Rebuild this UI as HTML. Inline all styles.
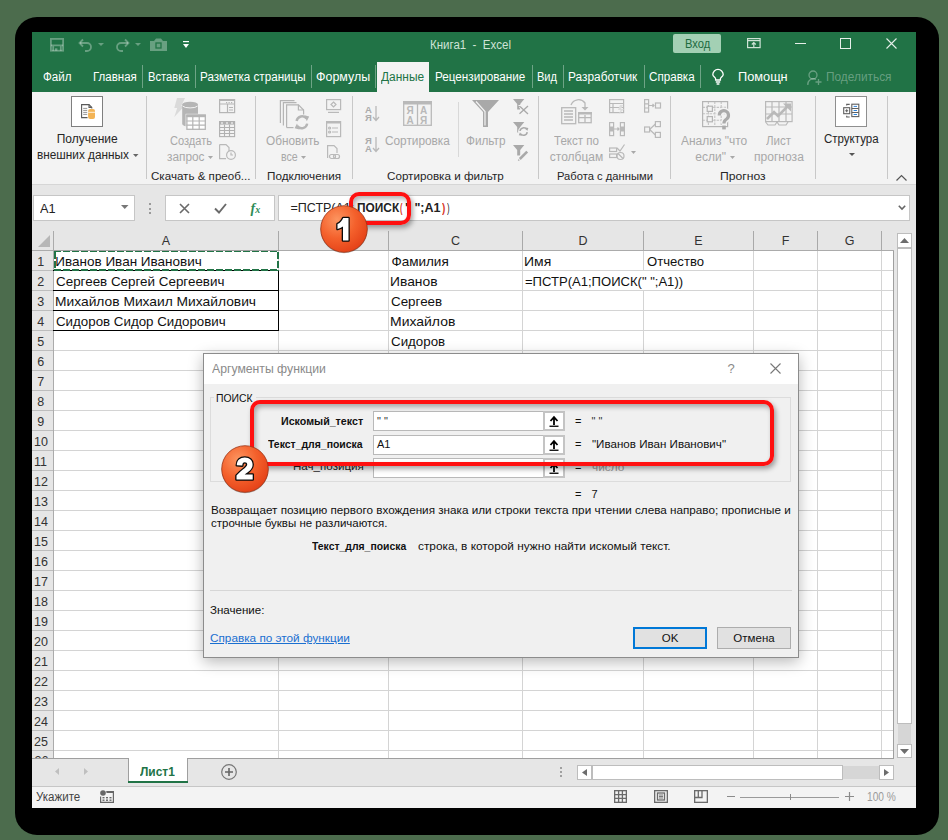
<!DOCTYPE html><html><head><meta charset="utf-8"><style>
html,body{margin:0;padding:0;}
body{width:948px;height:840px;position:relative;overflow:hidden;background:#4c6c4d;font-family:'Liberation Sans', sans-serif;}
.t{position:absolute;white-space:nowrap;line-height:1;}
svg{overflow:visible}
</style></head><body>
<div style="position:absolute;left:15px;top:17px;width:924px;height:818px;background:#000;border-radius:22px;"></div>
<div style="position:absolute;left:32px;top:32px;width:884px;height:776px;background:#f3f3f3;"></div>
<div style="position:absolute;left:32px;top:32px;width:884px;height:60px;background:#217346;"></div>
<svg style="position:absolute;left:50px;top:38px;" width="15" height="14" viewBox="0 0 15 14"><g fill="none" stroke="rgba(255,255,255,0.32)" stroke-width="1.8"><rect x="0.9" y="0.9" width="12.2" height="11.8"/><path d="M0.9 7.3 H13.1 M3.2 7.3 V12.7 M10.8 7.3 V12.7"/></g><rect x="5" y="10.3" width="2.4" height="2.4" fill="rgba(255,255,255,0.32)"/></svg>
<svg style="position:absolute;left:78px;top:38px;" width="16" height="13" viewBox="0 0 16 13"><g fill="none" stroke="rgba(255,255,255,0.32)" stroke-width="1.8"><path d="M2 5 H9 A4 4 0 0 1 9 13 H7"/><path d="M5 1.5 L1.5 5 L5 8.5"/></g></svg>
<svg style="position:absolute;left:98px;top:43px;" width="7" height="3" viewBox="0 0 7 3"><path d="M0 0 H6 L3 3Z" fill="rgba(255,255,255,0.32)"/></svg>
<svg style="position:absolute;left:114px;top:38px;" width="16" height="13" viewBox="0 0 16 13"><g fill="none" stroke="rgba(255,255,255,0.32)" stroke-width="1.8"><path d="M14 5 H7 A4 4 0 0 0 7 13 H9"/><path d="M11 1.5 L14.5 5 L11 8.5"/></g></svg>
<svg style="position:absolute;left:135px;top:43px;" width="7" height="3" viewBox="0 0 7 3"><path d="M0 0 H6 L3 3Z" fill="rgba(255,255,255,0.32)"/></svg>
<svg style="position:absolute;left:150px;top:38px;" width="17" height="13" viewBox="0 0 17 13"><path d="M0 3 H4 L6 0.5 H11 L13 3 H17 V13 H0Z" fill="rgba(255,255,255,0.32)"/><rect x="6" y="5" width="5" height="5" fill="none" stroke="#217346" stroke-width="1.3"/></svg>
<svg style="position:absolute;left:183px;top:41px;" width="7" height="8" viewBox="0 0 7 8"><rect x="0" y="0" width="6" height="1.2" fill="#fff"/><path d="M0 3 H6 L3 7Z" fill="#fff"/></svg>
<div class="t" style="top:38.80px;font-size:12px;color:#cfe3d6;left:429.70px;transform:scaleX(0.9583);transform-origin:0 0;">Книга1&nbsp; - &nbsp;Excel</div>
<div style="position:absolute;left:673px;top:34px;width:48px;height:19px;background:#a3d0b4;border-radius:2px;"></div>
<div class="t" style="top:37.60px;font-size:12px;color:#1e6b40;left:684.50px;transform:scaleX(0.9320);transform-origin:0 0;">Вход</div>
<svg style="position:absolute;left:747px;top:38px;" width="14" height="10" viewBox="0 0 14 10"><g fill="none" stroke="#cfe3d6" stroke-width="1.2"><rect x="0.6" y="0.6" width="12.5" height="9"/><line x1="0.6" y1="2.6" x2="13" y2="2.6"/><path d="M6.8 9.5 V4.5 M4.8 6.5 L6.8 4.5 L8.8 6.5"/></g></svg>
<div style="position:absolute;left:795px;top:43px;width:11px;height:1px;background:#e6efe9;"></div>
<div style="position:absolute;left:840px;top:38px;width:11px;height:11px;border:1px solid #e6efe9;box-sizing:border-box;"></div>
<svg style="position:absolute;left:886px;top:38px;" width="11" height="11" viewBox="0 0 11 11"><path d="M0.5 0.5 L10.5 10.5 M10.5 0.5 L0.5 10.5" stroke="#e6efe9" stroke-width="1.1"/></svg>
<div style="position:absolute;left:377px;top:62px;width:52px;height:30px;background:#f3f3f3;"></div>
<div class="t" style="top:71.30px;font-size:12px;color:#ffffff;left:43.20px;transform:scaleX(0.9661);transform-origin:0 0;">Файл</div>
<div class="t" style="top:71.30px;font-size:12px;color:#ffffff;left:93.30px;transform:scaleX(0.9585);transform-origin:0 0;">Главная</div>
<div class="t" style="top:71.30px;font-size:12px;color:#ffffff;left:148.00px;transform:scaleX(0.9304);transform-origin:0 0;">Вставка</div>
<div class="t" style="top:71.30px;font-size:12px;color:#ffffff;left:200.00px;transform:scaleX(0.9701);transform-origin:0 0;">Разметка страницы</div>
<div class="t" style="top:71.30px;font-size:12px;color:#ffffff;left:316.00px;transform:scaleX(1.0369);transform-origin:0 0;">Формулы</div>
<div class="t" style="top:71.30px;font-size:12px;color:#ffffff;left:435.40px;transform:scaleX(0.9743);transform-origin:0 0;">Рецензирование</div>
<div class="t" style="top:71.30px;font-size:12px;color:#ffffff;left:537.00px;transform:scaleX(0.9214);transform-origin:0 0;">Вид</div>
<div class="t" style="top:71.30px;font-size:12px;color:#ffffff;left:568.00px;transform:scaleX(0.9897);transform-origin:0 0;">Разработчик</div>
<div class="t" style="top:71.30px;font-size:12px;color:#ffffff;left:649.00px;transform:scaleX(0.9705);transform-origin:0 0;">Справка</div>
<div class="t" style="top:71.30px;font-size:12px;color:#217346;left:380.60px;transform:scaleX(0.9936);transform-origin:0 0;">Данные</div>
<div style="position:absolute;left:142px;top:65px;width:1px;height:23px;background:rgba(255,255,255,0.35);"></div>
<div style="position:absolute;left:195px;top:65px;width:1px;height:23px;background:rgba(255,255,255,0.35);"></div>
<div style="position:absolute;left:310.5px;top:65px;width:1px;height:23px;background:rgba(255,255,255,0.35);"></div>
<div style="position:absolute;left:375px;top:65px;width:1px;height:23px;background:rgba(255,255,255,0.35);"></div>
<div style="position:absolute;left:531.5px;top:65px;width:1px;height:23px;background:rgba(255,255,255,0.35);"></div>
<div style="position:absolute;left:562.5px;top:65px;width:1px;height:23px;background:rgba(255,255,255,0.35);"></div>
<div style="position:absolute;left:643.5px;top:65px;width:1px;height:23px;background:rgba(255,255,255,0.35);"></div>
<div style="position:absolute;left:700px;top:65px;width:1px;height:23px;background:rgba(255,255,255,0.35);"></div>
<svg style="position:absolute;left:712px;top:69px;" width="13" height="16" viewBox="0 0 13 16"><g fill="none" stroke="#fff" stroke-width="1.3"><path d="M3.6 11 V9.8 C3.6 8.4 0.8 7.6 0.8 5.6 A5.2 5.2 0 0 1 11.2 5.6 C11.2 7.6 8.4 8.4 8.4 9.8 V11 Z"/><path d="M3.8 13 H8.2 M4.6 15 H7.4"/></g></svg>
<div class="t" style="top:71.30px;font-size:12px;color:#fff;left:738.00px;transform:scaleX(1.0630);transform-origin:0 0;">Помощн</div>
<svg style="position:absolute;left:807px;top:69.5px;" width="15" height="16" viewBox="0 0 15 16"><g fill="none" stroke="rgba(255,255,255,0.32)" stroke-width="1.3"><circle cx="6" cy="5" r="4"/><path d="M0.8 15 A5.5 5.5 0 0 1 9 9.5"/><path d="M11.5 9 V15 M8.5 12 H14.5"/></g></svg>
<div class="t" style="top:71.30px;font-size:12px;color:rgba(255,255,255,0.32);left:826.00px;transform:scaleX(0.9884);transform-origin:0 0;">Поделиться</div>
<div style="position:absolute;left:32px;top:92px;width:884px;height:92px;background:#f3f3f3;"></div>
<div style="position:absolute;left:32px;top:184px;width:884px;height:1px;background:#d6d6d6;"></div>
<div style="position:absolute;left:146px;top:96px;width:1px;height:83px;background:#c8c8c8;"></div>
<div style="position:absolute;left:255px;top:96px;width:1px;height:83px;background:#c8c8c8;"></div>
<div style="position:absolute;left:352px;top:96px;width:1px;height:83px;background:#c8c8c8;"></div>
<div style="position:absolute;left:538px;top:96px;width:1px;height:83px;background:#c8c8c8;"></div>
<div style="position:absolute;left:670px;top:96px;width:1px;height:83px;background:#c8c8c8;"></div>
<div style="position:absolute;left:815px;top:96px;width:1px;height:83px;background:#c8c8c8;"></div>
<div style="position:absolute;left:887px;top:96px;width:1px;height:83px;background:#c8c8c8;"></div>
<div style="position:absolute;left:458px;top:102px;width:1px;height:55px;background:#d8d8d8;"></div>
<div style="position:absolute;left:71px;top:96px;width:32px;height:31px;background:#fff;border:1.2px solid #7f7f7f;box-sizing:border-box;"></div>
<svg style="position:absolute;left:80px;top:103px;" width="17" height="17" viewBox="0 0 17 17"><g fill="none" stroke="#5a5a5a" stroke-width="1.1"><path d="M7.5 14.6 H1.6 V1.6 H9 L11.8 4.4 V5.6"/><path d="M9 1.6 V4.4 H11.8"/></g><path d="M3.2 5.4 H7.2 M3.2 7.4 H7.2 M3.2 9.4 H7.2 M3.2 11.4 H7.2" stroke="#8a8a8a" stroke-width="0.9"/><rect x="8.1" y="6" width="6.9" height="10" rx="2" fill="#f3b456"/><path d="M8.1 9.3 H15" stroke="#fff" stroke-width="0.8"/></svg>
<div class="t" style="top:132.80px;font-size:12px;color:#262626;left:56.70px;">Получение</div>
<div class="t" style="top:148.80px;font-size:12px;color:#262626;left:36.80px;transform:scaleX(0.9837);transform-origin:0 0;">внешних данных</div>
<svg style="position:absolute;left:133px;top:154px;" width="6" height="3" viewBox="0 0 6 3"><path d="M0 0 H5.5 L2.75 3Z" fill="#666"/></svg>
<div class="t" style="top:171.03px;font-size:11.5px;color:#262626;left:150.70px;transform:scaleX(1.0073);transform-origin:0 0;">Скачать &amp; преоб...</div>
<svg style="position:absolute;left:174px;top:98px;" width="32" height="32" viewBox="0 0 32 32"><path d="M3 0 H11 L7.2 8 H10.5 L0.3 19 L3.2 10 H0.3 Z" fill="#dadada"/><path d="M8.2 6.5 V26 A7.9 2.8 0 0 0 24 26 V6.5Z" fill="#b5b5b5"/><ellipse cx="16.1" cy="6.5" rx="7.9" ry="2.8" fill="#b5b5b5"/><path d="M8.6 8 A7.9 2.8 0 0 0 23.6 8" fill="none" stroke="#f3f3f3" stroke-width="1"/><rect x="11.6" y="15.8" width="21" height="17" fill="#f3f3f3"/><rect x="12.9" y="17.1" width="18.4" height="14.2" fill="#fff" stroke="#b5b5b5" stroke-width="1.3"/><rect x="12.3" y="16.6" width="19.6" height="2.6" fill="#b5b5b5"/><path d="M12.4 23 H31.8 M12.4 27.2 H31.8 M18.8 18 V31.9 M25.2 18 V31.9" stroke="#b5b5b5" stroke-width="1.2"/></svg>
<div class="t" style="top:134.50px;font-size:12px;color:#a8a8a8;left:169.70px;transform:scaleX(0.9217);transform-origin:0 0;">Создать</div>
<div class="t" style="top:151.00px;font-size:12px;color:#a8a8a8;left:167.00px;transform:scaleX(0.9863);transform-origin:0 0;">запрос</div>
<svg style="position:absolute;left:208px;top:155.5px;" width="5" height="3" viewBox="0 0 5 3"><path d="M0 0 H5 L2.5 3Z" fill="#a8a8a8"/></svg>
<svg style="position:absolute;left:219px;top:99px;" width="16" height="14" viewBox="0 0 16 14"><g fill="none" stroke="#b5b5b5" stroke-width="1.2"><rect x="0.6" y="0.6" width="15" height="13"/><path d="M0.6 5 H15.6 M8.5 5 V13.6 M10 8.5 H14 M10 11 H14"/></g><rect x="0" y="0" width="16" height="2" fill="#b5b5b5"/><g fill="#b5b5b5"><rect x="7" y="3" width="1.2" height="1.2"/><rect x="9.5" y="3" width="1.2" height="1.2"/><rect x="12" y="3" width="1.2" height="1.2"/></g></svg>
<svg style="position:absolute;left:219px;top:121px;" width="16" height="16" viewBox="0 0 16 16"><g fill="none" stroke="#b0b0b0" stroke-width="1.1"><rect x="0.6" y="0.6" width="15" height="15"/><path d="M0.6 6.5 H15.6 M0.6 9.5 H15.6 M0.6 12.5 H15.6 M5.5 3.5 V15.6 M10.5 3.5 V15.6"/></g><rect x="0" y="0" width="16" height="3.6" fill="#b0b0b0"/><g fill="#fff"><rect x="2" y="1.5" width="2" height="1"/><rect x="7" y="1.5" width="2" height="1"/><rect x="12" y="1.5" width="2" height="1"/></g></svg>
<svg style="position:absolute;left:219px;top:144px;" width="17" height="16" viewBox="0 0 17 16"><g fill="none" stroke="#b9b9b9" stroke-width="1.2"><path d="M0.6 0.6 H7 L10 3.6 V7 M0.6 0.6 V14.6 H7"/><circle cx="12" cy="11" r="4.4"/><path d="M12 8.5 V11 H14"/></g></svg>
<svg style="position:absolute;left:279px;top:100px;" width="32" height="31" viewBox="0 0 32 31"><g fill="none" stroke="#b5b5b5" stroke-width="1.2"><path d="M1.4 23 V0.6 H15.5"/><path d="M4.4 25.5 V2.6 H17.5"/><path d="M7.6 27.6 V4.8 H19.5 L24.6 10 V14.5"/><path d="M7.6 27.6 H14.5"/><path d="M19.4 4.8 V10 H24.6"/></g><rect x="15" y="15" width="16" height="16" fill="#f3f3f3"/><g fill="none" stroke="#b5b5b5" stroke-width="2.4"><path d="M17.6 21 A5.6 5.6 0 0 1 27.6 18.6"/><path d="M28.2 23.6 A5.6 5.6 0 0 1 18.2 26"/></g><path d="M25.4 15.2 L30.2 16.4 L27.8 21.2Z M20.4 29.4 L15.6 28.2 L18 23.4Z" fill="#b5b5b5"/></svg>
<div class="t" style="top:134.50px;font-size:12px;color:#a8a8a8;left:266.40px;transform:scaleX(0.9837);transform-origin:0 0;">Обновить</div>
<div class="t" style="top:151.00px;font-size:12px;color:#a8a8a8;left:281.00px;transform:scaleX(0.8836);transform-origin:0 0;">все</div>
<svg style="position:absolute;left:301px;top:155.5px;" width="5" height="3" viewBox="0 0 5 3"><path d="M0 0 H5 L2.5 3Z" fill="#a8a8a8"/></svg>
<svg style="position:absolute;left:326px;top:99px;" width="15" height="14" viewBox="0 0 15 14"><g fill="none" stroke="#b9b9b9" stroke-width="1.2"><rect x="0.6" y="0.6" width="14" height="10"/><path d="M2 13.4 H13"/></g><path d="M7.5 3 L10 5.5 L7.5 8 L5 5.5Z" fill="none" stroke="#b9b9b9" stroke-width="1.2"/></svg>
<svg style="position:absolute;left:326px;top:121px;" width="15" height="16" viewBox="0 0 15 16"><g fill="none" stroke="#b9b9b9" stroke-width="1.2"><rect x="0.6" y="0.6" width="14" height="15"/><path d="M6 7 H12 M6 11 H12"/><circle cx="3.6" cy="7" r="1"/><circle cx="3.6" cy="11" r="1"/></g><rect x="0" y="0" width="15" height="2.5" fill="#b9b9b9"/></svg>
<svg style="position:absolute;left:327px;top:145px;" width="14" height="15" viewBox="0 0 14 15"><g fill="none" stroke="#b9b9b9" stroke-width="1.2"><path d="M0.6 13 V0.6 H7 L10 3.6 V8"/><rect x="2.5" y="9.5" width="6" height="4" rx="2"/><rect x="6.5" y="9.5" width="6" height="4" rx="2"/></g></svg>
<div class="t" style="top:171.03px;font-size:11.5px;color:#262626;left:266.60px;transform:scaleX(1.0176);transform-origin:0 0;">Подключения</div>
<svg style="position:absolute;left:365px;top:105px;" width="15" height="17" viewBox="0 0 15 17"><text x="0" y="7.5" font-size="9.5" font-weight="bold" font-family="Liberation Sans" fill="#ababab">А</text><text x="0" y="15.5" font-size="9.5" font-weight="bold" font-family="Liberation Sans" fill="#ababab">Я</text><path d="M11 1 V15 M8 12 L11 15.5 L14 12" fill="none" stroke="#b9b9b9" stroke-width="1.3"/></svg>
<svg style="position:absolute;left:365px;top:136px;" width="15" height="17" viewBox="0 0 15 17"><text x="0" y="7.5" font-size="9.5" font-weight="bold" font-family="Liberation Sans" fill="#ababab">Я</text><text x="0" y="15.5" font-size="9.5" font-weight="bold" font-family="Liberation Sans" fill="#ababab">А</text><path d="M11 1 V15 M8 12 L11 15.5 L14 12" fill="none" stroke="#b9b9b9" stroke-width="1.3"/></svg>
<svg style="position:absolute;left:403px;top:101px;" width="29" height="25" viewBox="0 0 29 25"><rect x="0.7" y="0.7" width="27.6" height="23.6" fill="none" stroke="#b9b9b9" stroke-width="1.3"/><rect x="0" y="0" width="29" height="3.5" fill="#b9b9b9"/><path d="M14.5 3 V24" stroke="#b9b9b9" stroke-width="1.3"/><g font-size="10" font-family="Liberation Sans" font-weight="bold" fill="#b9b9b9"><text x="3.5" y="13">Я</text><text x="3.5" y="22.5">А</text><text x="17" y="13">А</text><text x="17" y="22.5">Я</text></g></svg>
<div class="t" style="top:134.50px;font-size:12px;color:#a8a8a8;left:385.40px;transform:scaleX(0.9851);transform-origin:0 0;">Сортировка</div>
<svg style="position:absolute;left:472px;top:100px;" width="27" height="27" viewBox="0 0 27 27"><path d="M0 0 H27 L16 12 V27 H11 V12Z" fill="#a9a9a9"/><path d="M4 1.5 L13 11.5 V25.5" fill="none" stroke="#f3f3f3" stroke-width="1.2"/></svg>
<div class="t" style="top:134.50px;font-size:12px;color:#a8a8a8;left:465.80px;transform:scaleX(0.9794);transform-origin:0 0;">Фильтр</div>
<svg style="position:absolute;left:513px;top:99px;" width="17" height="16" viewBox="0 0 17 16"><path d="M0 0 H11.3 L7.2 5 V10.5 H4.2 V5 Z" fill="#a9a9a9"/><path d="M5.5 6.5 H8 V12" fill="none" stroke="#f3f3f3" stroke-width="1"/><path d="M6.5 14.8 L15 7 M7 7.5 L15 15" stroke="#f3f3f3" stroke-width="3"/><path d="M6.5 14.8 L15 7 M7 7.5 L15 15" stroke="#a9a9a9" stroke-width="1.3"/></svg>
<svg style="position:absolute;left:513px;top:122px;" width="17" height="16" viewBox="0 0 17 16"><path d="M0 0 H11.3 L7.2 5 V10.5 H4.2 V5 Z" fill="#a9a9a9"/><circle cx="10.6" cy="9.6" r="5.5" fill="#f3f3f3"/><g fill="none" stroke="#a9a9a9" stroke-width="1.5"><path d="M7 9 A3.7 3.7 0 0 1 13.8 7.6"/><path d="M14.2 10.2 A3.7 3.7 0 0 1 7.4 11.6"/></g><path d="M12.4 5.4 L15.4 6 L14.2 9Z M8.8 13.8 L5.8 13.2 L7 10.2Z" fill="#a9a9a9"/></svg>
<svg style="position:absolute;left:513px;top:145px;" width="17" height="17" viewBox="0 0 17 17"><path d="M0 0 H11.3 L7.2 5 V10.5 H4.2 V5 Z" fill="#a9a9a9"/><path d="M5.2 15.6 L14.6 6.2" stroke="#f3f3f3" stroke-width="4.6"/><path d="M6.8 14 L14.2 6.6" stroke="#a9a9a9" stroke-width="2.6"/><path d="M4.8 16 L6.9 15.2 L5.6 13.9Z" fill="#a9a9a9"/></svg>
<div class="t" style="top:171.03px;font-size:11.5px;color:#262626;left:386.70px;transform:scaleX(1.0132);transform-origin:0 0;">Сортировка и фильтр</div>
<svg style="position:absolute;left:561px;top:99px;" width="31" height="26" viewBox="0 0 31 26"><g fill="none" stroke="#b9b9b9" stroke-width="1.3"><rect x="0.7" y="8.7" width="14" height="16"/><path d="M3 12 H12 M3 15 H12 M3 18 H12 M3 21 H12"/><rect x="17.7" y="13.7" width="12.5" height="10"/><path d="M17.7 18.7 H30 M24 16 V23.7"/><path d="M10 6 A8 8 0 0 1 24 4 V10"/></g><rect x="17" y="13" width="14" height="2.5" fill="#b9b9b9"/><path d="M20.5 8 L24 11.5 L27.5 8Z" fill="#b9b9b9"/></svg>
<div class="t" style="top:134.50px;font-size:12px;color:#a8a8a8;left:553.50px;transform:scaleX(0.9629);transform-origin:0 0;">Текст по</div>
<div class="t" style="top:151.00px;font-size:12px;color:#a8a8a8;left:549.80px;">столбцам</div>
<svg style="position:absolute;left:609px;top:99px;" width="16" height="15" viewBox="0 0 16 15"><g fill="none" stroke="#b9b9b9" stroke-width="1.2"><rect x="0.6" y="0.6" width="14" height="13"/><path d="M0.6 4.5 H14 M0.6 8.5 H14 M4 4.5 V13"/></g><path d="M11 6 L14 6 L12 10 L15 10 L10 15 L11.5 11 L9 11Z" fill="#ddd"/></svg>
<svg style="position:absolute;left:609px;top:122px;" width="16" height="14" viewBox="0 0 16 14"><g fill="none" stroke="#b9b9b9" stroke-width="1.2"><rect x="0.6" y="0.6" width="4" height="13"/><rect x="11.4" y="0.6" width="4" height="13"/><path d="M5 7 H10 M8.5 5.5 L10 7 L8.5 8.5"/></g><rect x="0.6" y="4.5" width="4" height="5" fill="#b9b9b9"/><rect x="11.4" y="4.5" width="4" height="5" fill="#b9b9b9"/></svg>
<svg style="position:absolute;left:609px;top:144px;" width="16" height="16" viewBox="0 0 16 16"><g fill="none" stroke="#b9b9b9" stroke-width="1.2"><rect x="0.6" y="4" width="7" height="3.5"/><rect x="0.6" y="10" width="7" height="3.5"/><path d="M8 4 L11 7 L15.5 0.5"/><circle cx="11.5" cy="12" r="3.5"/><path d="M9 9.5 L14 14.5"/></g></svg>
<svg style="position:absolute;left:631px;top:151px;" width="5" height="3" viewBox="0 0 5 3"><path d="M0 0 H5 L2.5 3Z" fill="#a8a8a8"/></svg>
<svg style="position:absolute;left:644px;top:99px;" width="17" height="14" viewBox="0 0 17 14"><g fill="none" stroke="#b9b9b9" stroke-width="1.2"><rect x="0.6" y="0.6" width="4" height="12.5"/><path d="M0.6 4.8 H4.6 M0.6 9 H4.6"/><rect x="11.5" y="4" width="5" height="5"/><path d="M5 6.5 H10 M8.5 5 L10 6.5 L8.5 8"/></g></svg>
<svg style="position:absolute;left:644px;top:121px;" width="17" height="17" viewBox="0 0 17 17"><g fill="none" stroke="#b9b9b9" stroke-width="1.2"><rect x="0.6" y="6" width="5" height="5"/><rect x="11.4" y="0.6" width="5" height="5"/><rect x="11.4" y="11.4" width="5" height="5"/><path d="M5.6 8.5 L11.4 3 M5.6 8.5 L11.4 14"/></g></svg>
<div class="t" style="top:171.03px;font-size:11.5px;color:#262626;left:556.90px;transform:scaleX(0.9738);transform-origin:0 0;">Работа с данными</div>
<svg style="position:absolute;left:702px;top:101px;" width="30" height="30" viewBox="0 0 30 30"><g fill="none" stroke="#c4c4c4" stroke-width="1.1"><path d="M6.4 0.6 V25.6 M12.8 0.6 V25.6 M19.2 0.6 V25.6 M0.6 6.4 H25.6 M0.6 12.8 H25.6 M0.6 19.2 H25.6" stroke-dasharray="2.5 1"/></g><rect x="0.6" y="0.6" width="25" height="25" fill="none" stroke="#b5b5b5" stroke-width="1.2"/><rect x="5.2" y="5.2" width="5.2" height="5.2" fill="#f3f3f3" stroke="#b5b5b5" stroke-width="1.2"/><rect x="5.2" y="15.6" width="5.2" height="5.2" fill="#f3f3f3" stroke="#b5b5b5" stroke-width="1.2"/><path d="M17.3 14.5 A4.6 4.6 0 1 1 24.6 18 C22.8 19.2 21.9 20 21.9 22.5" fill="none" stroke="#f3f3f3" stroke-width="6"/><path d="M17.3 14.5 A4.6 4.6 0 1 1 24.6 18 C22.8 19.2 21.9 20 21.9 22.5" fill="none" stroke="#ababab" stroke-width="3.2"/><rect x="20.2" y="24.6" width="3.6" height="3.8" fill="#ababab"/></svg>
<div class="t" style="top:134.50px;font-size:12px;color:#a8a8a8;left:681.20px;transform:scaleX(0.9967);transform-origin:0 0;">Анализ "что</div>
<div class="t" style="top:151.00px;font-size:12px;color:#a8a8a8;left:695.30px;">если"</div>
<svg style="position:absolute;left:730px;top:155.5px;" width="5" height="3" viewBox="0 0 5 3"><path d="M0 0 H5 L2.5 3Z" fill="#a8a8a8"/></svg>
<svg style="position:absolute;left:765px;top:101px;" width="28" height="25" viewBox="0 0 28 25"><g fill="none" stroke="#b9b9b9" stroke-width="1.2"><rect x="0.6" y="0.6" width="26.5" height="20"/><path d="M0.6 6 H27 M0.6 13 H27 M7 0.6 V21 M14 0.6 V21 M21 0.6 V21"/><path d="M0.6 21 L3 24 H10 L12 21 M12 21 L14 24 H21 L23 21"/></g><path d="M2 18 L9 11 L13 15 L24 4" fill="none" stroke="#b9b9b9" stroke-width="2.6"/><path d="M18 2.5 H26 V10.5Z" fill="#b9b9b9"/></svg>
<div class="t" style="top:134.50px;font-size:12px;color:#a8a8a8;left:766.20px;transform:scaleX(0.9594);transform-origin:0 0;">Лист</div>
<div class="t" style="top:151.00px;font-size:12px;color:#a8a8a8;left:753.60px;transform:scaleX(1.0062);transform-origin:0 0;">прогноза</div>
<div class="t" style="top:171.03px;font-size:11.5px;color:#262626;left:719.70px;transform:scaleX(1.0590);transform-origin:0 0;">Прогноз</div>
<div style="position:absolute;left:835px;top:96px;width:32px;height:31px;background:#fff;border:1px solid #8f8f8f;box-sizing:border-box;"></div>
<svg style="position:absolute;left:843px;top:103px;" width="17" height="15" viewBox="0 0 17 15"><g fill="none" stroke="#5f5f5f" stroke-width="1.1"><rect x="0.7" y="4.7" width="6" height="6"/><path d="M3.7 6.2 V9.2 M2.2 7.7 H5.2"/><path d="M3.7 2.6 V1.4 H6.7 M3.7 12.8 V14 H6.7"/><rect x="8.8" y="1.2" width="7" height="12.4"/><path d="M8.8 5.5 H15.8 M8.8 9.5 H15.8"/></g><path d="M10.6 3.4 H14 M10.6 7.5 H14 M10.6 11.5 H14" stroke="#2f86dd" stroke-width="1"/></svg>
<div class="t" style="top:132.60px;font-size:12px;color:#262626;left:823.50px;transform:scaleX(0.9589);transform-origin:0 0;">Структура</div>
<svg style="position:absolute;left:849px;top:153px;" width="6" height="3" viewBox="0 0 6 3"><path d="M0 0 H6 L3 3Z" fill="#555"/></svg>
<svg style="position:absolute;left:896px;top:175px;" width="11" height="6" viewBox="0 0 11 6"><path d="M0.5 5.5 L5.5 0.5 L10.5 5.5" fill="none" stroke="#555" stroke-width="1.2"/></svg>
<div style="position:absolute;left:32px;top:185px;width:884px;height:46px;background:#e6e6e6;"></div>
<div style="position:absolute;left:33px;top:195px;width:102px;height:26px;background:#fff;border:1px solid #c6c6c6;box-sizing:border-box;"></div>
<div class="t" style="top:203.18px;font-size:12.5px;color:#222;left:40.00px;transform:scaleX(1.0171);transform-origin:0 0;">A1</div>
<svg style="position:absolute;left:121px;top:205px;" width="8" height="4" viewBox="0 0 8 4"><path d="M0 0 H7.5 L3.75 4Z" fill="#777"/></svg>
<div style="position:absolute;left:149px;top:203px;width:2px;height:2px;background:#9a9a9a;"></div>
<div style="position:absolute;left:149px;top:207.5px;width:2px;height:2px;background:#9a9a9a;"></div>
<div style="position:absolute;left:149px;top:212px;width:2px;height:2px;background:#9a9a9a;"></div>
<div style="position:absolute;left:165px;top:195px;width:110px;height:26px;background:#fff;border:1px solid #c6c6c6;box-sizing:border-box;"></div>
<svg style="position:absolute;left:179px;top:203px;" width="11" height="11" viewBox="0 0 11 11"><path d="M1 1 L10 10 M10 1 L1 10" stroke="#6a6a6a" stroke-width="1.6"/></svg>
<svg style="position:absolute;left:214px;top:203px;" width="13" height="11" viewBox="0 0 13 11"><path d="M1 5.5 L5 9.5 L12 1" fill="none" stroke="#6a6a6a" stroke-width="1.9"/></svg>
<div class="t" style="top:201.10px;font-size:14px;color:#2e8b57;left:250.50px;"><i style="font-family:Liberation Serif;font-weight:bold">f<span style="font-size:10px">x</span></i></div>
<div style="position:absolute;left:278px;top:195px;width:632px;height:26px;background:#fff;border:1px solid #c6c6c6;box-sizing:border-box;"></div>
<svg style="position:absolute;left:898px;top:205px;" width="8" height="5" viewBox="0 0 8 5"><path d="M0.8 0.8 L4 4 L7.2 0.8" fill="none" stroke="#666" stroke-width="1.6"/></svg>
<div class="t" style="top:202.38px;font-size:12.5px;color:#222;left:290.50px;">=ПСТР(A1;</div>
<div class="t" style="top:202.38px;font-size:12.5px;color:#222;font-weight:bold;left:356.50px;transform:scaleX(0.9504);transform-origin:0 0;">ПОИСК</div>
<div class="t" style="top:202.38px;font-size:12.5px;color:#d83a2a;font-weight:bold;left:400.00px;transform:scaleX(0.6000);transform-origin:0 0;">(</div>
<div class="t" style="top:202.38px;font-size:12.5px;color:#222;font-weight:bold;left:405.00px;">" ";A1</div>
<div class="t" style="top:202.38px;font-size:12.5px;color:#d83a2a;font-weight:bold;left:441.80px;transform:scaleX(0.8000);transform-origin:0 0;">)</div>
<div class="t" style="top:202.38px;font-size:12.5px;color:#222;left:446.90px;transform:scaleX(0.6250);transform-origin:0 0;">)</div>
<div style="position:absolute;left:32px;top:231px;width:862px;height:20px;background:#e6e6e6;"></div>
<div style="position:absolute;left:32px;top:251px;width:21px;height:507px;background:#e6e6e6;"></div>
<div style="position:absolute;left:54px;top:251px;width:840px;height:507px;background:#fff;"></div>
<div style="position:absolute;left:32px;top:250px;width:862px;height:1px;background:#ababab;"></div>
<div style="position:absolute;left:53px;top:231px;width:1px;height:527px;background:#ababab;"></div>
<div style="position:absolute;left:278px;top:231px;width:1px;height:19px;background:#a9a9a9;"></div>
<div style="position:absolute;left:278px;top:251px;width:1px;height:507px;background:#d4d4d4;"></div>
<div style="position:absolute;left:388px;top:231px;width:1px;height:19px;background:#a9a9a9;"></div>
<div style="position:absolute;left:388px;top:251px;width:1px;height:507px;background:#d4d4d4;"></div>
<div style="position:absolute;left:522px;top:231px;width:1px;height:19px;background:#a9a9a9;"></div>
<div style="position:absolute;left:522px;top:251px;width:1px;height:507px;background:#d4d4d4;"></div>
<div style="position:absolute;left:643px;top:231px;width:1px;height:19px;background:#a9a9a9;"></div>
<div style="position:absolute;left:643px;top:251px;width:1px;height:507px;background:#d4d4d4;"></div>
<div style="position:absolute;left:753px;top:231px;width:1px;height:19px;background:#a9a9a9;"></div>
<div style="position:absolute;left:753px;top:251px;width:1px;height:507px;background:#d4d4d4;"></div>
<div style="position:absolute;left:817px;top:231px;width:1px;height:19px;background:#a9a9a9;"></div>
<div style="position:absolute;left:817px;top:251px;width:1px;height:507px;background:#d4d4d4;"></div>
<div style="position:absolute;left:881px;top:231px;width:1px;height:19px;background:#a9a9a9;"></div>
<div style="position:absolute;left:881px;top:251px;width:1px;height:507px;background:#d4d4d4;"></div>
<div style="position:absolute;left:893px;top:251px;width:1px;height:507px;background:#9f9f9f;"></div>
<div style="position:absolute;left:54px;top:270px;width:839px;height:1px;background:#d4d4d4;"></div>
<div style="position:absolute;left:32px;top:270px;width:21px;height:1px;background:#bdbdbd;"></div>
<div style="position:absolute;left:54px;top:290px;width:839px;height:1px;background:#d4d4d4;"></div>
<div style="position:absolute;left:32px;top:290px;width:21px;height:1px;background:#bdbdbd;"></div>
<div style="position:absolute;left:54px;top:310px;width:839px;height:1px;background:#d4d4d4;"></div>
<div style="position:absolute;left:32px;top:310px;width:21px;height:1px;background:#bdbdbd;"></div>
<div style="position:absolute;left:54px;top:330px;width:839px;height:1px;background:#d4d4d4;"></div>
<div style="position:absolute;left:32px;top:330px;width:21px;height:1px;background:#bdbdbd;"></div>
<div style="position:absolute;left:54px;top:350px;width:839px;height:1px;background:#d4d4d4;"></div>
<div style="position:absolute;left:32px;top:350px;width:21px;height:1px;background:#bdbdbd;"></div>
<div style="position:absolute;left:54px;top:370px;width:839px;height:1px;background:#d4d4d4;"></div>
<div style="position:absolute;left:32px;top:370px;width:21px;height:1px;background:#bdbdbd;"></div>
<div style="position:absolute;left:54px;top:390px;width:839px;height:1px;background:#d4d4d4;"></div>
<div style="position:absolute;left:32px;top:390px;width:21px;height:1px;background:#bdbdbd;"></div>
<div style="position:absolute;left:54px;top:410px;width:839px;height:1px;background:#d4d4d4;"></div>
<div style="position:absolute;left:32px;top:410px;width:21px;height:1px;background:#bdbdbd;"></div>
<div style="position:absolute;left:54px;top:430px;width:839px;height:1px;background:#d4d4d4;"></div>
<div style="position:absolute;left:32px;top:430px;width:21px;height:1px;background:#bdbdbd;"></div>
<div style="position:absolute;left:54px;top:450px;width:839px;height:1px;background:#d4d4d4;"></div>
<div style="position:absolute;left:32px;top:450px;width:21px;height:1px;background:#bdbdbd;"></div>
<div style="position:absolute;left:54px;top:470px;width:839px;height:1px;background:#d4d4d4;"></div>
<div style="position:absolute;left:32px;top:470px;width:21px;height:1px;background:#bdbdbd;"></div>
<div style="position:absolute;left:54px;top:490px;width:839px;height:1px;background:#d4d4d4;"></div>
<div style="position:absolute;left:32px;top:490px;width:21px;height:1px;background:#bdbdbd;"></div>
<div style="position:absolute;left:54px;top:510px;width:839px;height:1px;background:#d4d4d4;"></div>
<div style="position:absolute;left:32px;top:510px;width:21px;height:1px;background:#bdbdbd;"></div>
<div style="position:absolute;left:54px;top:530px;width:839px;height:1px;background:#d4d4d4;"></div>
<div style="position:absolute;left:32px;top:530px;width:21px;height:1px;background:#bdbdbd;"></div>
<div style="position:absolute;left:54px;top:550px;width:839px;height:1px;background:#d4d4d4;"></div>
<div style="position:absolute;left:32px;top:550px;width:21px;height:1px;background:#bdbdbd;"></div>
<div style="position:absolute;left:54px;top:570px;width:839px;height:1px;background:#d4d4d4;"></div>
<div style="position:absolute;left:32px;top:570px;width:21px;height:1px;background:#bdbdbd;"></div>
<div style="position:absolute;left:54px;top:590px;width:839px;height:1px;background:#d4d4d4;"></div>
<div style="position:absolute;left:32px;top:590px;width:21px;height:1px;background:#bdbdbd;"></div>
<div style="position:absolute;left:54px;top:610px;width:839px;height:1px;background:#d4d4d4;"></div>
<div style="position:absolute;left:32px;top:610px;width:21px;height:1px;background:#bdbdbd;"></div>
<div style="position:absolute;left:54px;top:630px;width:839px;height:1px;background:#d4d4d4;"></div>
<div style="position:absolute;left:32px;top:630px;width:21px;height:1px;background:#bdbdbd;"></div>
<div style="position:absolute;left:54px;top:650px;width:839px;height:1px;background:#d4d4d4;"></div>
<div style="position:absolute;left:32px;top:650px;width:21px;height:1px;background:#bdbdbd;"></div>
<div style="position:absolute;left:54px;top:670px;width:839px;height:1px;background:#d4d4d4;"></div>
<div style="position:absolute;left:32px;top:670px;width:21px;height:1px;background:#bdbdbd;"></div>
<div style="position:absolute;left:54px;top:690px;width:839px;height:1px;background:#d4d4d4;"></div>
<div style="position:absolute;left:32px;top:690px;width:21px;height:1px;background:#bdbdbd;"></div>
<div style="position:absolute;left:54px;top:710px;width:839px;height:1px;background:#d4d4d4;"></div>
<div style="position:absolute;left:32px;top:710px;width:21px;height:1px;background:#bdbdbd;"></div>
<div style="position:absolute;left:54px;top:730px;width:839px;height:1px;background:#d4d4d4;"></div>
<div style="position:absolute;left:32px;top:730px;width:21px;height:1px;background:#bdbdbd;"></div>
<div style="position:absolute;left:54px;top:750px;width:839px;height:1px;background:#d4d4d4;"></div>
<div style="position:absolute;left:32px;top:750px;width:21px;height:1px;background:#bdbdbd;"></div>
<svg style="position:absolute;left:38px;top:235px;" width="12" height="12" viewBox="0 0 12 12"><path d="M12 0 V12 H0Z" fill="#b7b7b7"/></svg>
<div class="t" style="top:235.38px;font-size:12.5px;color:#333;left:166.0px;transform:translateX(-50%);">A</div>
<div class="t" style="top:235.38px;font-size:12.5px;color:#333;left:333.5px;transform:translateX(-50%);">B</div>
<div class="t" style="top:235.38px;font-size:12.5px;color:#333;left:455.5px;transform:translateX(-50%);">C</div>
<div class="t" style="top:235.38px;font-size:12.5px;color:#333;left:583.0px;transform:translateX(-50%);">D</div>
<div class="t" style="top:235.38px;font-size:12.5px;color:#333;left:698.5px;transform:translateX(-50%);">E</div>
<div class="t" style="top:235.38px;font-size:12.5px;color:#333;left:785.5px;transform:translateX(-50%);">F</div>
<div class="t" style="top:235.38px;font-size:12.5px;color:#333;left:849.5px;transform:translateX(-50%);">G</div>
<div class="t" style="top:256.18px;font-size:12.5px;color:#333;left:37.20px;">1</div>
<div class="t" style="top:276.18px;font-size:12.5px;color:#333;left:37.20px;">2</div>
<div class="t" style="top:296.18px;font-size:12.5px;color:#333;left:37.20px;">3</div>
<div class="t" style="top:316.18px;font-size:12.5px;color:#333;left:37.20px;">4</div>
<div class="t" style="top:336.18px;font-size:12.5px;color:#333;left:37.20px;">5</div>
<div class="t" style="top:356.18px;font-size:12.5px;color:#333;left:37.20px;">6</div>
<div class="t" style="top:376.18px;font-size:12.5px;color:#333;left:37.20px;">7</div>
<div class="t" style="top:396.18px;font-size:12.5px;color:#333;left:37.20px;">8</div>
<div class="t" style="top:416.18px;font-size:12.5px;color:#333;left:37.20px;">9</div>
<div class="t" style="top:436.18px;font-size:12.5px;color:#333;left:34.00px;">10</div>
<div class="t" style="top:456.18px;font-size:12.5px;color:#333;left:34.00px;">11</div>
<div class="t" style="top:476.18px;font-size:12.5px;color:#333;left:34.00px;">12</div>
<div class="t" style="top:496.18px;font-size:12.5px;color:#333;left:34.00px;">13</div>
<div class="t" style="top:516.17px;font-size:12.5px;color:#333;left:34.00px;">14</div>
<div class="t" style="top:536.17px;font-size:12.5px;color:#333;left:34.00px;">15</div>
<div class="t" style="top:556.17px;font-size:12.5px;color:#333;left:34.00px;">16</div>
<div class="t" style="top:576.17px;font-size:12.5px;color:#333;left:34.00px;">17</div>
<div class="t" style="top:596.17px;font-size:12.5px;color:#333;left:34.00px;">18</div>
<div class="t" style="top:616.17px;font-size:12.5px;color:#333;left:34.00px;">19</div>
<div class="t" style="top:636.17px;font-size:12.5px;color:#333;left:34.00px;">20</div>
<div class="t" style="top:656.17px;font-size:12.5px;color:#333;left:34.00px;">21</div>
<div class="t" style="top:676.17px;font-size:12.5px;color:#333;left:34.00px;">22</div>
<div class="t" style="top:696.17px;font-size:12.5px;color:#333;left:34.00px;">23</div>
<div class="t" style="top:716.17px;font-size:12.5px;color:#333;left:34.00px;">24</div>
<div class="t" style="top:736.17px;font-size:12.5px;color:#333;left:34.00px;">25</div>
<div style="position:absolute;left:32px;top:751px;width:21px;height:7px;overflow:hidden"><div class="t" style="left:2.5px;top:4.38px;font-size:12.5px;color:#333">26</div></div>
<div class="t" style="top:254.53px;font-size:13.5px;color:#111;left:55.30px;">Иванов Иван Иванович</div>
<div class="t" style="top:274.52px;font-size:13.5px;color:#111;left:56.30px;transform:scaleX(0.9927);transform-origin:0 0;">Сергеев Сергей Сергеевич</div>
<div class="t" style="top:294.52px;font-size:13.5px;color:#111;left:55.28px;transform:scaleX(1.0223);transform-origin:0 0;">Михайлов Михаил Михайлович</div>
<div class="t" style="top:314.52px;font-size:13.5px;color:#111;left:56.30px;transform:scaleX(0.9869);transform-origin:0 0;">Сидоров Сидор Сидорович</div>
<div class="t" style="top:254.53px;font-size:13.5px;color:#111;left:391.40px;">Фамилия</div>
<div class="t" style="top:274.52px;font-size:13.5px;color:#111;left:390.38px;transform:scaleX(1.0245);transform-origin:0 0;">Иванов</div>
<div class="t" style="top:294.52px;font-size:13.5px;color:#111;left:391.40px;transform:scaleX(0.9920);transform-origin:0 0;">Сергеев</div>
<div class="t" style="top:314.52px;font-size:13.5px;color:#111;left:390.37px;transform:scaleX(1.0344);transform-origin:0 0;">Михайлов</div>
<div class="t" style="top:334.52px;font-size:13.5px;color:#111;left:391.40px;transform:scaleX(0.9874);transform-origin:0 0;">Сидоров</div>
<div class="t" style="top:254.53px;font-size:13.5px;color:#111;left:524.26px;transform:scaleX(1.0366);transform-origin:0 0;">Имя</div>
<div class="t" style="top:254.53px;font-size:13.5px;color:#111;left:646.60px;transform:scaleX(0.9711);transform-origin:0 0;">Отчество</div>
<div style="position:absolute;left:643px;top:271px;width:1px;height:19px;background:#fff;"></div>
<div class="t" style="top:274.52px;font-size:13.5px;color:#111;left:525.30px;transform:scaleX(0.9668);transform-origin:0 0;">=ПСТР(A1;ПОИСК(" ";A1))</div>
<div style="position:absolute;left:53px;top:270px;width:226px;height:1px;background:#000;"></div>
<div style="position:absolute;left:53px;top:290px;width:226px;height:1px;background:#000;"></div>
<div style="position:absolute;left:53px;top:310px;width:226px;height:1px;background:#000;"></div>
<div style="position:absolute;left:53px;top:330px;width:226px;height:1px;background:#000;"></div>
<div style="position:absolute;left:278px;top:270px;width:1px;height:61px;background:#000;"></div>
<div style="position:absolute;left:54px;top:250px;width:225px;height:21px;box-sizing:border-box;background:linear-gradient(90deg,#217346 7px,transparent 7px) 0 0/9px 2px repeat-x,linear-gradient(90deg,#217346 7px,transparent 7px) 0 100%/9px 2px repeat-x,linear-gradient(180deg,#217346 7px,transparent 7px) 0 2px/2px 9px repeat-y,linear-gradient(180deg,#217346 7px,transparent 7px) 100% 2px/2px 9px repeat-y;"></div>
<div style="position:absolute;left:54px;top:250px;width:225px;height:1px;background:#9f9f9f;"></div>
<div style="position:absolute;left:894px;top:231px;width:22px;height:527px;background:#e6e6e6;"></div>
<div style="position:absolute;left:897px;top:233px;width:15px;height:15px;background:#fff;border:1px solid #bdbdbd;box-sizing:border-box;"></div>
<svg style="position:absolute;left:900px;top:238px;" width="9" height="5" viewBox="0 0 9 5"><path d="M0 5 H9 L4.5 0Z" fill="#6d6d6d"/></svg>
<div style="position:absolute;left:897px;top:248px;width:15px;height:476px;background:#fff;border:1px solid #bdbdbd;box-sizing:border-box;"></div>
<div style="position:absolute;left:898px;top:724px;width:13px;height:20px;background:#d6d6d6;"></div>
<div style="position:absolute;left:897px;top:744px;width:15px;height:14px;background:#fff;border:1px solid #bdbdbd;box-sizing:border-box;"></div>
<svg style="position:absolute;left:900px;top:749px;" width="9" height="5" viewBox="0 0 9 5"><path d="M0 0 H9 L4.5 5Z" fill="#6d6d6d"/></svg>
<div style="position:absolute;left:32px;top:758px;width:884px;height:29px;background:#e6e6e6;"></div>
<div style="position:absolute;left:32px;top:758px;width:862px;height:1px;background:#9f9f9f;"></div>
<div style="position:absolute;left:32px;top:786px;width:884px;height:1px;background:#c6c6c6;"></div>
<svg style="position:absolute;left:55px;top:768px;" width="4" height="7" viewBox="0 0 4 7"><path d="M4 0 V7 L0 3.5Z" fill="#bfbfbf"/></svg>
<svg style="position:absolute;left:84px;top:768px;" width="4" height="7" viewBox="0 0 4 7"><path d="M0 0 V7 L4 3.5Z" fill="#bfbfbf"/></svg>
<div style="position:absolute;left:128px;top:758px;width:60px;height:25px;background:#fff;border-left:1px solid #9f9f9f;border-right:1px solid #9f9f9f;box-sizing:border-box;"></div>
<div style="position:absolute;left:128px;top:781px;width:60px;height:2px;background:#217346;"></div>
<div class="t" style="top:764.95px;font-size:13px;color:#217346;font-weight:bold;left:140.00px;transform:scaleX(0.9175);transform-origin:0 0;">Лист1</div>
<svg style="position:absolute;left:221px;top:764px;" width="16" height="16" viewBox="0 0 16 16"><circle cx="8" cy="8" r="7.3" fill="none" stroke="#777" stroke-width="1.2"/><path d="M8 4 V12 M4 8 H12" stroke="#666" stroke-width="1.6"/></svg>
<div style="position:absolute;left:560px;top:767px;width:2px;height:2px;background:#a0a0a0;"></div>
<div style="position:absolute;left:560px;top:771px;width:2px;height:2px;background:#a0a0a0;"></div>
<div style="position:absolute;left:560px;top:775px;width:2px;height:2px;background:#a0a0a0;"></div>
<div style="position:absolute;left:577px;top:765px;width:15px;height:15px;background:#fff;border:1px solid #bdbdbd;box-sizing:border-box;"></div>
<svg style="position:absolute;left:582px;top:769px;" width="5" height="7" viewBox="0 0 5 7"><path d="M5 0 V7 L0 3.5Z" fill="#6d6d6d"/></svg>
<div style="position:absolute;left:592px;top:765px;width:251px;height:15px;background:#fff;border:1px solid #bdbdbd;box-sizing:border-box;"></div>
<div style="position:absolute;left:843px;top:766px;width:36px;height:13px;background:#d6d6d6;"></div>
<div style="position:absolute;left:879px;top:765px;width:15px;height:15px;background:#fff;border:1px solid #bdbdbd;box-sizing:border-box;"></div>
<svg style="position:absolute;left:884px;top:769px;" width="5" height="7" viewBox="0 0 5 7"><path d="M0 0 V7 L5 3.5Z" fill="#6d6d6d"/></svg>
<div style="position:absolute;left:32px;top:787px;width:884px;height:21px;background:#f3f3f3;"></div>
<div class="t" style="top:790.80px;font-size:12px;color:#444;left:35.80px;transform:scaleX(0.9620);transform-origin:0 0;">Укажите</div>
<svg style="position:absolute;left:100px;top:790px;" width="14" height="13" viewBox="0 0 14 13"><circle cx="3" cy="3" r="2.8" fill="#666"/><g fill="none" stroke="#666" stroke-width="1.2"><path d="M6.5 1.6 H13.4 V12.4 H0.6 V6.5"/></g><rect x="6.5" y="1" width="7.5" height="2" fill="#666"/><g fill="#666"><rect x="2.5" y="7" width="2" height="1.4"/><rect x="6" y="7" width="2" height="1.4"/><rect x="9.5" y="7" width="2" height="1.4"/><rect x="2.5" y="9.5" width="2" height="1.4"/><rect x="6" y="9.5" width="2" height="1.4"/><rect x="9.5" y="9.5" width="2" height="1.4"/></g></svg>
<svg style="position:absolute;left:614px;top:790px;" width="13" height="13" viewBox="0 0 13 13"><g fill="none" stroke="#6a6a6a" stroke-width="1.3"><rect x="0.65" y="0.65" width="11.7" height="11.7"/><path d="M4.6 0.6 V12.4 M8.4 0.6 V12.4 M0.6 4.6 H12.4 M0.6 8.4 H12.4"/></g></svg>
<svg style="position:absolute;left:654px;top:790px;" width="14" height="13" viewBox="0 0 14 13"><g fill="none" stroke="#6a6a6a" stroke-width="1.3"><rect x="0.65" y="0.65" width="12.7" height="11.7"/><rect x="3.5" y="3" width="7" height="7"/><path d="M5 5 H9 M5 6.5 H9 M5 8 H9" stroke-width="0.9"/></g></svg>
<svg style="position:absolute;left:694px;top:790px;" width="14" height="13" viewBox="0 0 14 13"><g fill="none" stroke="#6a6a6a" stroke-width="1.3"><rect x="0.65" y="0.65" width="12.7" height="11.7"/><path d="M0.6 7.5 H8 V0.6 M4.3 0.6 V7.5"/></g></svg>
<div style="position:absolute;left:727px;top:796px;width:8px;height:1.3px;background:#8a8a8a;"></div>
<div style="position:absolute;left:740px;top:797px;width:99px;height:1px;background:#9a9a9a;"></div>
<div style="position:absolute;left:790px;top:794px;width:1px;height:6px;background:#8a8a8a;"></div>
<svg style="position:absolute;left:845px;top:792px;" width="9" height="9" viewBox="0 0 9 9"><path d="M4.5 0 V9 M0 4.5 H9" stroke="#8a8a8a" stroke-width="1.2"/></svg>
<div class="t" style="top:790.80px;font-size:12px;color:#9a9a9a;left:866.80px;transform:scaleX(0.8470);transform-origin:0 0;">100 %</div>
<div style="position:absolute;left:203px;top:353px;width:596px;height:305px;background:#f0f0f0;border:1px solid #8c8c8c;box-sizing:border-box;box-shadow:0 4px 14px rgba(0,0,0,0.28);"></div>
<div style="position:absolute;left:204px;top:354px;width:594px;height:30px;background:#fff;"></div>
<div class="t" style="top:362.80px;font-size:12px;color:#8a8a8a;left:212.00px;transform:scaleX(1.0187);transform-origin:0 0;">Аргументы функции</div>
<div class="t" style="top:361.95px;font-size:13px;color:#8a8a8a;left:727.50px;">?</div>
<svg style="position:absolute;left:770px;top:363px;" width="11" height="11" viewBox="0 0 11 11"><path d="M0.5 0.5 L10.5 10.5 M10.5 0.5 L0.5 10.5" stroke="#777" stroke-width="1.1"/></svg>
<div style="position:absolute;left:210px;top:397px;width:581px;height:85px;border:1px solid #dcdcdc;box-sizing:border-box;"></div>
<div style="position:absolute;left:214px;top:392px;width:42px;height:10px;background:#f0f0f0;"></div>
<div class="t" style="top:392.65px;font-size:11px;color:#111;left:216.40px;transform:scaleX(0.9463);transform-origin:0 0;">ПОИСК</div>
<div class="t" style="top:415.95px;font-size:11px;color:#111;font-weight:bold;left:280.90px;transform:scaleX(0.9689);transform-origin:0 0;">Искомый_текст</div>
<div class="t" style="top:438.65px;font-size:11px;color:#111;font-weight:bold;left:268.20px;transform:scaleX(0.9490);transform-origin:0 0;">Текст_для_поиска</div>
<div class="t" style="top:461.35px;font-size:11px;color:#222;left:292.70px;transform:scaleX(1.0542);transform-origin:0 0;">Нач_позиция</div>
<div style="position:absolute;left:373px;top:411px;width:171px;height:20px;background:#fff;border:1px solid #b9b9b9;box-sizing:border-box;"></div>
<div style="position:absolute;left:543px;top:411px;width:22px;height:20px;background:#fff;border:2px solid #c4c4c4;box-sizing:border-box;"></div>
<svg style="position:absolute;left:549px;top:416px;" width="10" height="11" viewBox="0 0 10 11"><path d="M5 9 V1.5 M1.5 5 L5 1.2 L8.5 5" fill="none" stroke="#000" stroke-width="1.8"/><rect x="0.5" y="9.6" width="9" height="1.3" fill="#000"/></svg>
<div style="position:absolute;left:373px;top:434.5px;width:171px;height:20px;background:#fff;border:1px solid #b9b9b9;box-sizing:border-box;"></div>
<div style="position:absolute;left:543px;top:434.5px;width:22px;height:20px;background:#fff;border:2px solid #c4c4c4;box-sizing:border-box;"></div>
<svg style="position:absolute;left:549px;top:439.5px;" width="10" height="11" viewBox="0 0 10 11"><path d="M5 9 V1.5 M1.5 5 L5 1.2 L8.5 5" fill="none" stroke="#000" stroke-width="1.8"/><rect x="0.5" y="9.6" width="9" height="1.3" fill="#000"/></svg>
<div style="position:absolute;left:373px;top:457.5px;width:171px;height:20px;background:#fff;border:1px solid #b9b9b9;box-sizing:border-box;"></div>
<div style="position:absolute;left:543px;top:457.5px;width:22px;height:20px;background:#fff;border:2px solid #c4c4c4;box-sizing:border-box;"></div>
<svg style="position:absolute;left:549px;top:462.5px;" width="10" height="11" viewBox="0 0 10 11"><path d="M5 9 V1.5 M1.5 5 L5 1.2 L8.5 5" fill="none" stroke="#000" stroke-width="1.8"/><rect x="0.5" y="9.6" width="9" height="1.3" fill="#000"/></svg>
<div class="t" style="top:416.15px;font-size:11px;color:#333;left:377.00px;">" "</div>
<div class="t" style="top:439.15px;font-size:11px;color:#111;left:377.00px;">A1</div>
<div class="t" style="top:416.15px;font-size:11px;color:#111;left:575.00px;">=</div>
<div class="t" style="top:416.15px;font-size:11px;color:#333;left:591.50px;">" "</div>
<div class="t" style="top:438.65px;font-size:11px;color:#111;left:575.00px;">=</div>
<div class="t" style="top:438.65px;font-size:11px;color:#111;left:591.50px;transform:scaleX(1.0536);transform-origin:0 0;">"Иванов Иван Иванович"</div>
<div class="t" style="top:461.65px;font-size:11px;color:#111;left:575.00px;">=</div>
<div class="t" style="top:461.65px;font-size:11px;color:#9a9a9a;left:591.50px;transform:scaleX(1.0730);transform-origin:0 0;">число</div>
<div class="t" style="top:488.65px;font-size:11px;color:#111;left:575.00px;">=</div>
<div class="t" style="top:488.65px;font-size:11px;color:#111;left:591.50px;">7</div>
<div class="t" style="top:504.65px;font-size:11px;color:#111;left:211.00px;transform:scaleX(1.0635);transform-origin:0 0;">Возвращает позицию первого вхождения знака или строки текста при чтении слева направо; прописные и</div>
<div class="t" style="top:517.95px;font-size:11px;color:#111;left:211.00px;transform:scaleX(1.0453);transform-origin:0 0;">строчные буквы не различаются.</div>
<div class="t" style="top:541.05px;font-size:11px;color:#111;font-weight:bold;left:312.30px;transform:scaleX(0.9450);transform-origin:0 0;">Текст_для_поиска</div>
<div class="t" style="top:541.05px;font-size:11px;color:#111;left:417.70px;transform:scaleX(1.0759);transform-origin:0 0;">строка, в которой нужно найти искомый текст.</div>
<div style="position:absolute;left:210px;top:590px;width:582px;height:1px;background:#d6d6d6;"></div>
<div class="t" style="top:604.65px;font-size:11px;color:#111;left:210.00px;transform:scaleX(1.0506);transform-origin:0 0;">Значение:</div>
<div class="t" style="top:633.25px;font-size:11px;color:#1a6fd0;left:210.00px;transform:scaleX(1.0689);transform-origin:0 0;"><u>Справка по этой функции</u></div>
<div style="position:absolute;left:633px;top:627px;width:74px;height:22px;background:#e1e1e1;border:2px solid #0078d7;box-sizing:border-box;"></div>
<div class="t" style="top:633.23px;font-size:11.5px;color:#111;left:670px;transform:translateX(-50%);">OK</div>
<div style="position:absolute;left:717px;top:627px;width:74px;height:22px;background:#e1e1e1;border:1px solid #adadad;box-sizing:border-box;"></div>
<div class="t" style="top:633.23px;font-size:11.5px;color:#111;left:754px;transform:translateX(-50%);">Отмена</div>
<div style="position:absolute;left:349px;top:191.5px;width:61.5px;height:33px;box-sizing:border-box;border:4.3px solid #ff1010;border-radius:10px;box-shadow:2px 3px 5px rgba(0,0,0,0.35), inset 2px 3px 5px rgba(0,0,0,0.3);"></div>
<div style="position:absolute;left:249.5px;top:400px;width:524px;height:65.5px;box-sizing:border-box;border:4.3px solid #ff1010;border-radius:10px;box-shadow:2px 3px 5px rgba(0,0,0,0.35), inset 2px 3px 5px rgba(0,0,0,0.3);"></div>
<svg style="position:absolute;left:314.4px;top:199.2px" width="60" height="60" viewBox="0 0 60 60"><defs><radialGradient id="g1" cx="0.35" cy="0.3" r="0.8"><stop offset="0" stop-color="#fc9560"/><stop offset="0.5" stop-color="#f4612c"/><stop offset="1" stop-color="#e23c14"/></radialGradient></defs><circle cx="30" cy="31" r="23.3" fill="rgba(0,0,0,0.25)"/><circle cx="30" cy="30" r="23.3" fill="url(#g1)" stroke="#9a3315" stroke-width="0.8"/><path d="M29.2 19 H34.5 V41.4 H29 V27.4 C27.2 28.7 25.4 29.4 23.5 30 V25 C25.8 24.2 28 22 29.2 19 Z" fill="#fff" stroke="#0a0a0a" stroke-width="2.6" stroke-linejoin="round" paint-order="stroke"/></svg>
<svg style="position:absolute;left:214.5px;top:439px" width="60" height="60" viewBox="0 0 60 60"><defs><radialGradient id="g2" cx="0.35" cy="0.3" r="0.8"><stop offset="0" stop-color="#fc9560"/><stop offset="0.5" stop-color="#f4612c"/><stop offset="1" stop-color="#e23c14"/></radialGradient></defs><circle cx="30" cy="31" r="23.3" fill="rgba(0,0,0,0.25)"/><circle cx="30" cy="30" r="23.3" fill="url(#g2)" stroke="#9a3315" stroke-width="0.8"/><path d="M21.8 26.2 C21.8 21.3 25.2 18.5 29.8 18.5 C34.6 18.5 37.6 21.4 37.6 25.4 C37.6 29.4 35 31.6 31.6 34 L29.6 35.5 H37.7 V40.4 H21.5 V36.6 C24 33.6 27 31.2 29.6 29.2 C31.6 27.6 32.2 26.6 32.2 25.3 C32.2 24 31.3 23.2 29.8 23.2 C28.2 23.2 27.3 24.4 27.3 26.6 Z" fill="#fff" stroke="#0a0a0a" stroke-width="2.6" stroke-linejoin="round" paint-order="stroke"/></svg>
</body></html>
